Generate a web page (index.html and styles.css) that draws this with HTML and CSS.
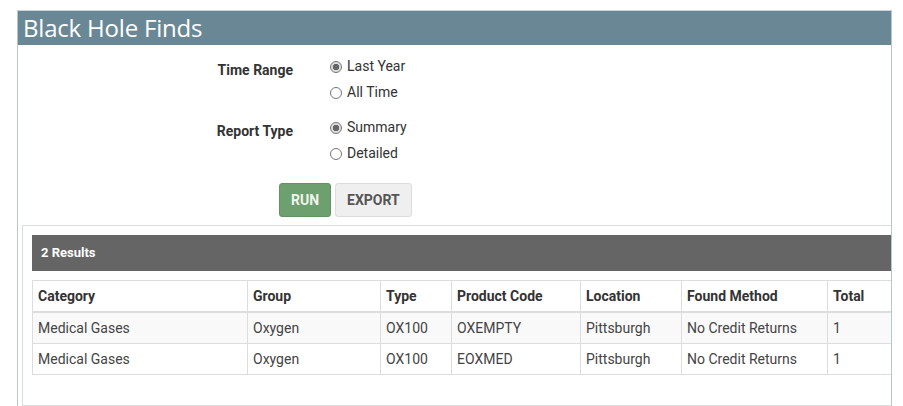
FILE: index.html
```html
<!DOCTYPE html>
<html lang="en">
<head>
    <meta charset="UTF-8">
    <title>Black Hole Finds</title>
    <link rel="stylesheet" href="styles.css">
</head>
<body>
    <div class="panel">
        <h1 class="panel-title">Black Hole Finds</h1>

        <form class="filters">
            <div class="field">
                <label class="field-label">Time Range</label>
                <div class="options">
                    <label class="option"><input type="radio" name="range" checked> Last Year</label>
                    <label class="option"><input type="radio" name="range"> All Time</label>
                </div>
            </div>
            <div class="field">
                <label class="field-label">Report Type</label>
                <div class="options">
                    <label class="option"><input type="radio" name="type" checked> Summary</label>
                    <label class="option"><input type="radio" name="type"> Detailed</label>
                </div>
            </div>
            <div class="actions">
                <button type="button" class="btn btn-run">RUN</button>
                <button type="button" class="btn btn-export">EXPORT</button>
            </div>
        </form>

        <div class="results">
            <div class="results-head">2 Results</div>
            <table class="grid">
                <colgroup>
                    <col class="c-cat">
                    <col class="c-group">
                    <col class="c-type">
                    <col class="c-code">
                    <col class="c-loc">
                    <col class="c-method">
                    <col class="c-total">
                </colgroup>
                <thead>
                    <tr>
                        <th>Category</th>
                        <th>Group</th>
                        <th>Type</th>
                        <th>Product Code</th>
                        <th>Location</th>
                        <th>Found Method</th>
                        <th>Total</th>
                    </tr>
                </thead>
                <tbody>
                    <tr>
                        <td>Medical Gases</td>
                        <td>Oxygen</td>
                        <td>OX100</td>
                        <td>OXEMPTY</td>
                        <td>Pittsburgh</td>
                        <td>No Credit Returns</td>
                        <td>1</td>
                    </tr>
                    <tr>
                        <td>Medical Gases</td>
                        <td>Oxygen</td>
                        <td>OX100</td>
                        <td>EOXMED</td>
                        <td>Pittsburgh</td>
                        <td>No Credit Returns</td>
                        <td>1</td>
                    </tr>
                </tbody>
            </table>
        </div>
    </div>
</body>
</html>
```

FILE: styles.css
```css
body {
    margin: 0;
    background: #fff;
    font-family: Roboto, "Liberation Sans", Arial, sans-serif;
    font-size: 14px;
    color: #444;
}

.panel {
    margin: 10px 0 0 17px;
    width: 873px;
    height: 400px;
    border-left: 1px solid #b7c6ce;
    border-right: 1px solid #b7c6ce;
    border-top: 1px solid #c9d4da;
    overflow: hidden;
}

.panel-title {
    margin: 0;
    height: 34px;
    padding-left: 5px;
    background: #6a8796;
    color: #fff;
    font-family: "Open Sans", "Noto Sans", sans-serif;
    font-weight: 400;
    font-size: 24px;
    line-height: 34px;
    letter-spacing: -0.2px;
}

.filters {
    padding-top: 8px;
}

.field {
    display: flex;
    margin-bottom: 9px;
}

.field-label {
    width: 275px;
    padding-top: 4px;
    text-align: right;
    font-weight: 700;
    color: #333;
    line-height: 26px;
}

.options {
    margin-left: 37px;
}

.option {
    display: flex;
    align-items: center;
    height: 26px;
    color: #333;
}

.option input {
    appearance: none;
    -webkit-appearance: none;
    width: 12px;
    height: 12px;
    margin: 0 5px -1px 0;
    border: 1px solid #777;
    border-radius: 50%;
    background: #fff;
}

.option input:checked {
    background: radial-gradient(circle, #666 0 3px, #ddd 3.5px);
}

.actions {
    display: flex;
    gap: 4px;
    padding: 8px 0 0 261px;
}

.btn {
    height: 34px;
    padding: 0 11px;
    border-radius: 3px;
    font-family: inherit;
    font-size: 14px;
    font-weight: 700;
}

.btn-run {
    background: #6e9f6e;
    border: 1px solid #629462;
    color: #eef5ee;
}

.btn-export {
    background: #efefef;
    border: 1px solid #ddd;
    color: #555;
}

.results {
    margin: 8px 0 0 4px;
    width: 900px;
    padding: 9px 0 30px 9px;
    border-top: 1px solid #dcdcdc;
    border-left: 1px solid #dcdcdc;
    border-bottom: 1px solid #dcdcdc;
}

.results-head {
    height: 36px;
    line-height: 36px;
    padding-left: 9px;
    background: #656565;
    color: #fff;
    font-weight: 700;
    font-size: 13px;
}

.grid {
    margin-top: 9px;
    width: 875px;
    table-layout: fixed;
    border-collapse: collapse;
}

.grid th,
.grid td {
    height: 30px;
    padding: 0 5px;
    border: 1px solid #ddd;
    text-align: left;
    white-space: nowrap;
}

.grid th {
    color: #333;
    border-bottom-width: 2px;
}

.grid tbody tr:nth-child(odd) {
    background: #f9f9f9;
}

.c-cat { width: 215px; }
.c-group { width: 133px; }
.c-type { width: 71px; }
.c-code { width: 129px; }
.c-loc { width: 101px; }
.c-method { width: 146px; }
.c-total { width: 80px; }
```
